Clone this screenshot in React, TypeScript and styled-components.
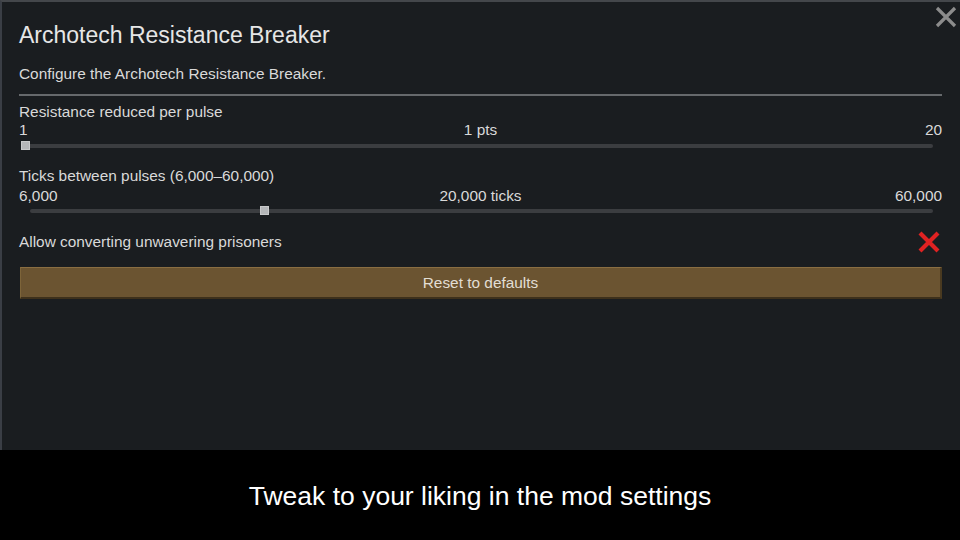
import React from "react";
import styled, { createGlobalStyle } from "styled-components";

const Global = createGlobalStyle`
  html, body { margin: 0; padding: 0; background: #000; }
  body { font-family: "Liberation Sans", Arial, sans-serif; }
  #root { width: 960px; height: 540px; overflow: hidden; }
`;

const Screen = styled.div`
  width: 960px;
  height: 540px;
  display: flex;
  flex-direction: column;
`;

const Panel = styled.div`
  position: relative;
  height: 450px;
  box-sizing: border-box;
  background: #1a1d20;
  border-top: 2px solid #44474b;
  border-left: 2px solid #3a3e45;
  padding: 20px 18px 0 17px;
  display: flex;
  flex-direction: column;
  color: #d9d9d9;
`;

const CloseButton = styled.div`
  position: absolute;
  top: 3px;
  right: 2px;
  width: 24px;
  height: 24px;
`;

const Title = styled.div`
  font-size: 23px;
  line-height: 26px;
  color: #e6e6e6;
`;

const Subtitle = styled.div`
  margin-top: 17px;
  font-size: 15.4px;
  line-height: 18px;
`;

const Separator = styled.div`
  margin-top: 11px;
  height: 2px;
  background: #66696c;
`;

const Group = styled.div<{ $mt: number }>`
  margin-top: ${(p) => p.$mt}px;
  display: flex;
  flex-direction: column;
`;

const Label = styled.div`
  font-size: 15.4px;
  line-height: 18px;
`;

const ValueRow = styled.div<{ $mt: number }>`
  margin-top: ${(p) => p.$mt}px;
  display: grid;
  grid-template-columns: 1fr auto 1fr;
  font-size: 15.4px;
  line-height: 18px;
`;

const Cell = styled.div<{ $align: "left" | "center" | "right" }>`
  text-align: ${(p) => p.$align};
`;

const SliderBox = styled.div<{ $left: number; $mt: number }>`
  position: relative;
  height: 14px;
  margin-top: ${(p) => p.$mt}px;
  margin-left: ${(p) => p.$left}px;
  margin-right: 9px;
`;

const Track = styled.div`
  position: absolute;
  left: 0;
  right: 0;
  top: 5px;
  height: 4px;
  border-radius: 2px;
  background: #3b3d40;
`;

const Thumb = styled.div`
  position: absolute;
  top: 2px;
  width: 9px;
  height: 9px;
  margin-left: -4px;
  background: #b4b6b8;
  border: 1px solid #c8c9ca;
  box-sizing: border-box;
`;

const ToggleRow = styled.div`
  margin-top: 15px;
  display: flex;
  align-items: center;
  justify-content: space-between;
  font-size: 15.4px;
  line-height: 18px;
  height: 18px;
`;

const ResetButton = styled.div`
  margin-top: 16px;
  margin-left: 1px;
  height: 32px;
  box-sizing: border-box;
  background: #6b5431;
  border-top: 1px solid #8a6e42;
  border-left: 1px solid #7d6439;
  border-right: 2px solid #4a3a20;
  border-bottom: 2px solid #3d301b;
  display: flex;
  align-items: center;
  justify-content: center;
  padding-top: 1px;
  font-size: 15.4px;
  color: #e2ded4;
`;

const Caption = styled.div`
  flex: 1;
  background: #000;
  color: #fff;
  display: flex;
  align-items: center;
  justify-content: center;
  font-size: 26.5px;
  padding-top: 2px;
`;

function Slider({ left, pct, mt }: { left: number; pct: number; mt: number }) {
  return (
    <SliderBox $left={left} $mt={mt}>
      <Track />
      <Thumb style={{ left: `${pct}%` }} />
    </SliderBox>
  );
}

export default function App() {
  return (
    <Screen>
      <Global />
      <Panel>
        <CloseButton>
          <svg width="24" height="24" viewBox="0 0 24 24">
            <path d="M3 3 L21 21 M21 3 L3 21" stroke="#8c8c8c" strokeWidth="3.2" />
          </svg>
        </CloseButton>
        <Title>Archotech Resistance Breaker</Title>
        <Subtitle>Configure the Archotech Resistance Breaker.</Subtitle>
        <Separator />
        <Group $mt={7}>
          <Label>Resistance reduced per pulse</Label>
          <ValueRow $mt={0}>
            <Cell $align="left">1</Cell>
            <Cell $align="center">1 pts</Cell>
            <Cell $align="right">20</Cell>
          </ValueRow>
          <Slider left={6} pct={0} mt={0} />
        </Group>
        <Group $mt={14}>
          <Label>Ticks between pulses (6,000–60,000)</Label>
          <ValueRow $mt={2}>
            <Cell $align="left">6,000</Cell>
            <Cell $align="center">20,000 ticks</Cell>
            <Cell $align="right">60,000</Cell>
          </ValueRow>
          <Slider left={11} pct={(14000 / 54000) * 100} mt={-1} />
        </Group>
        <ToggleRow>
          <span>Allow converting unwavering prisoners</span>
          <svg width="24" height="24" viewBox="0 0 24 24" style={{ marginRight: 1 }}>
            <path d="M3 3 L21 21 M21 3 L3 21" stroke="#e02222" strokeWidth="4.2" />
          </svg>
        </ToggleRow>
        <ResetButton>Reset to defaults</ResetButton>
      </Panel>
      <Caption>Tweak to your liking in the mod settings</Caption>
    </Screen>
  );
}
